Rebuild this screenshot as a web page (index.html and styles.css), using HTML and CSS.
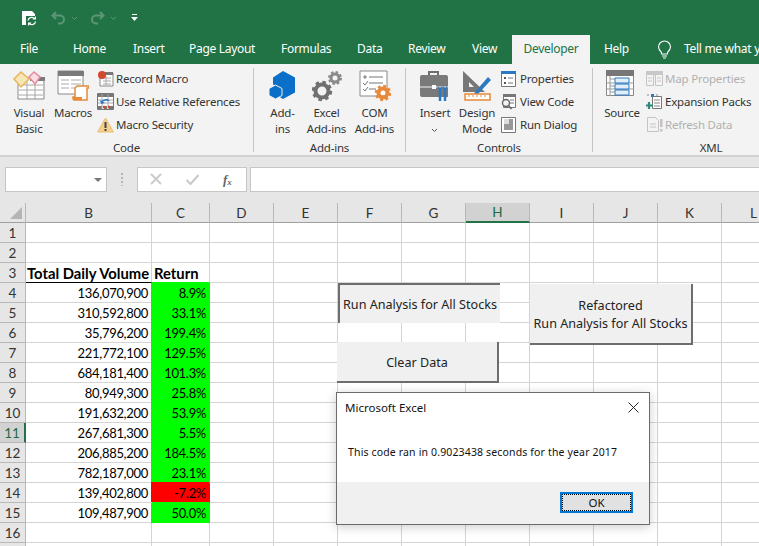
FILE: index.html
```html
<!DOCTYPE html>
<html lang="en">
<head>
    <meta charset="UTF-8">
    <meta name="viewport" content="width=device-width, initial-scale=1.0">
    <title>Microsoft Excel</title>
    <link rel="stylesheet" href="styles.css">
</head>
<body>
<div class="app">
    <div class="titlebar">
        <svg class="qa save" width="17" height="16" viewBox="0 0 17 16"><path d="M1 1h10l3 3v2H5v9H1z" fill="#fff"/><path d="M7 10.500a3.500 3.500 0 0 1 6-2M14.500 11.500a3.500 3.500 0 0 1-6 2" fill="none" stroke="#fff" stroke-width="1.300"/><path d="M15 6v3.500h-3.500zM7 16v-3.500h3.500z" fill="#fff"/></svg>
        <svg class="qa undo" width="15" height="14" viewBox="0 0 15 14"><path d="M5 1 1.500 4.500 5 8M2 4.500h7a4 4 0 0 1 0 8H7" fill="none" stroke="#5d9677" stroke-width="2"/></svg>
        <svg class="qa chev" width="7" height="5" viewBox="0 0 7 5"><path d="m1 1 2.500 2.500L6 1" fill="none" stroke="#5d9677"/></svg>
        <svg class="qa redo" width="15" height="14" viewBox="0 0 15 14"><path d="m10 1 3.500 3.500L10 8M13 4.500H6a4 4 0 0 0 0 8h2" fill="none" stroke="#5d9677" stroke-width="2"/></svg>
        <svg class="qa chev" width="7" height="5" viewBox="0 0 7 5"><path d="m1 1 2.500 2.500L6 1" fill="none" stroke="#5d9677"/></svg>
        <svg class="qa more" width="7" height="7" viewBox="0 0 7 7"><path d="M1 0h5v1H1zM0 3h7L3.500 7z" fill="#fff"/></svg>
    </div>

    <div class="tabs">
        <span class="tab tab-file">File</span>
        <span class="tab tab-home">Home</span>
        <span class="tab tab-insert">Insert</span>
        <span class="tab tab-layout">Page Layout</span>
        <span class="tab tab-formulas">Formulas</span>
        <span class="tab tab-data">Data</span>
        <span class="tab tab-review">Review</span>
        <span class="tab tab-view">View</span>
        <span class="tab tab-active">Developer</span>
        <span class="tab tab-help">Help</span>
        <svg class="bulb" width="15" height="19" viewBox="0 0 15 19"><path d="M4.500 12.500C3 11 1.500 9.500 1.500 7a6 6 0 0 1 12 0c0 2.500-1.500 4-3 5.500v1.500h-6zM5 16h5M6 18h3" fill="none" stroke="#fff" stroke-width="1.100"/></svg>
        <span class="tab tab-tell">Tell me what you want to do</span>
    </div>

    <div class="ribbon">
        <section class="group group-code">
            <div class="group-body">
                <div class="big big-vb">
                    <svg width="32" height="32" viewBox="0 0 32 32"><path d="M5 9h25v20H5z" fill="#fff"/><path d="M17 7h15v4H17z" fill="#7a7a7a"/><path d="M6 15h24M6 20h24M6 25h24M14 12v17M22 12v17" stroke="#a8a8a8" fill="none"/><path d="M5 29V14M31 29V10M5 29h26" stroke="#8a8a8a" fill="none"/><path d="m1 9 7-7 8 7-8 8z" fill="#f7e6b6" stroke="#e8b45c" stroke-width="1.500"/><path d="m16 7 5-5 6 5-5 7z" fill="#f9dfe4" stroke="#e48ba0" stroke-width="1.500"/></svg>
                    <span class="label">Visual<br>Basic</span>
                </div>
                <div class="big big-macros">
                    <svg width="32" height="32" viewBox="0 0 32 32"><path d="M1 1h25v23H1z" fill="#fff" stroke="#8a8a8a"/><path d="M1 1h26v5H1z" fill="#7a7a7a"/><path d="M4 10h8M14 10h10M4 14h8M14 14h10M4 18h8M14 18h6" stroke="#aaa"/><path d="M20 16h12v2h-2v12H17l-1-1v-2h2V18z" fill="#fff" stroke="#e28b3c" stroke-width="1.500"/><path d="M16 27h9v3H17z" fill="#e8893a"/></svg>
                    <span class="label">Macros</span>
                </div>
                <div class="stack stack-code">
                    <div class="row"><svg width="17" height="17" viewBox="0 0 17 17"><path d="M3 3h13v13H3z" fill="#fff" stroke="#888"/><path d="M3 2h13v3H3z" fill="#777"/><path d="M6 8h8M6 11h8M6 14h8M9 6v9" stroke="#aaa"/><circle cx="5" cy="5" r="4" fill="#d1492a"/></svg>Record Macro</div>
                    <div class="row"><svg width="17" height="17" viewBox="0 0 17 17"><path d="M.5.500h16v16H.5z" fill="#fff" stroke="#777"/><path d="M1 1h15v3H1zM1 13h4v3H1zM7 13h3v3H7zM12 13h4v3h-4z" fill="#777"/><path d="M1 7h15M1 10h15M5 1v15M11 1v15" stroke="#aaa"/><path d="M5 9a4 3 0 0 1 7-1" fill="none" stroke="#2b79c2" stroke-width="1.500"/><path d="m3 7 1 4 4-1z" fill="#2b79c2"/><path d="M6 14h2M11 14h2" stroke="#d1492a" stroke-width="2.500"/></svg>Use Relative References</div>
                    <div class="row"><svg width="17" height="16" viewBox="0 0 17 16"><path d="M8.500 1 16.500 15H.5z" fill="#f4cf8d" stroke="#e8c07a"/><path d="M7.500 5h2v6h-2zM7.500 12h2v2h-2z" fill="#444"/></svg>Macro Security</div>
                </div>
            </div>
            <div class="group-name">Code</div>
        </section>

        <section class="group group-addins">
            <div class="group-body">
                <div class="big big-add">
                    <svg width="30" height="32" viewBox="0 0 30 32"><path d="M15 1l12 6.500v15L15 29l-5-3v-9l-5-2.500V7.500z" fill="#0a6fc8"/><path d="M7.500 15 14 18.500V25.500L7.500 29 1 25.500V18.500z" fill="#0a6fc8" stroke="#f3f3f3"/></svg>
                    <span class="label">Add-<br>ins</span>
                </div>
                <div class="big big-excel">
                    <svg width="30" height="32" viewBox="0 0 30 32"><circle cx="10" cy="21" r="6.500" fill="none" stroke="#707070" stroke-width="4"/><circle cx="10" cy="21" r="9" fill="none" stroke="#707070" stroke-width="2.500" stroke-dasharray="3.500 3.600"/><circle cx="23" cy="8" r="4" fill="none" stroke="#8a8a8a" stroke-width="3"/><circle cx="23" cy="8" r="6" fill="none" stroke="#8a8a8a" stroke-width="2" stroke-dasharray="2.500 2.200"/></svg>
                    <span class="label">Excel<br>Add-ins</span>
                </div>
                <div class="big big-com">
                    <svg width="32" height="32" viewBox="0 0 32 32"><path d="M1 1h27v25H1z" fill="#fff" stroke="#8a8a8a"/><path d="M10 7h14M10 13h14M10 19h7M5 6h2v2H5z" stroke="#777" fill="none"/><path d="m4 13 2 2 3-4M4 19l2 2 3-4" stroke="#777" fill="none"/><circle cx="24" cy="23" r="4.500" fill="none" stroke="#e8893a" stroke-width="4"/><circle cx="24" cy="23" r="7" fill="none" stroke="#e8893a" stroke-width="2.500" stroke-dasharray="2.800 2.700"/></svg>
                    <span class="label">COM<br>Add-ins</span>
                </div>
            </div>
            <div class="group-name">Add-ins</div>
        </section>

        <section class="group group-controls">
            <div class="group-body">
                <div class="big big-insert">
                    <svg width="32" height="32" viewBox="0 0 32 32"><path d="M10 6V2h9v4" fill="none" stroke="#6e6e6e" stroke-width="2"/><path d="M1 7a2 2 0 0 1 2-2h24a2 2 0 0 1 2 2v20H3a2 2 0 0 1-2-2z" fill="#7a7a7a"/><path d="M1 17h28" stroke="#f3f3f3"/><path d="M13 15h4v4h-4z" fill="#fff"/><path d="M21 18v13M26 18v13" stroke="#2b79c2" stroke-width="2.500"/><path d="M19 17l2 3 2-3M24 17l2 3 2-3" stroke="#2b79c2" fill="none" stroke-width="1.500"/></svg>
                    <span class="label">Insert<br><svg class="drop" width="7" height="5" viewBox="0 0 7 5"><path d="m1 1 2.500 2.500L6 1" fill="none" stroke="#555"/></svg></span>
                </div>
                <div class="big big-design">
                    <svg width="32" height="32" viewBox="0 0 32 32"><path d="M2 1v21h22z" fill="#777"/><path d="M8 12v5h5z" fill="#f3f3f3"/><path d="m14 22 13-15 3 3-13 14-4 1z" fill="#2b79c2"/><path d="M4 24h25v6H4z" fill="#fff" stroke="#e8893a" stroke-width="1.500"/><path d="M8 25v2M12 25v2M16 25v2M20 25v2M24 25v2" stroke="#e8893a"/></svg>
                    <span class="label">Design<br>Mode</span>
                </div>
                <div class="stack stack-controls">
                    <div class="row"><svg width="15" height="17" viewBox="0 0 15 17"><path d="M.5 1.500h14v15H.5z" fill="#fff" stroke="#777"/><path d="M0 1h15v3H0z" fill="#2b79c2"/><path d="M3 7h2v2H3zM3 12h2v2H3z" fill="#555"/><path d="M7 8h5M7 13h5" stroke="#777"/></svg>Properties</div>
                    <div class="row"><svg width="15" height="17" viewBox="0 0 15 17"><path d="M2.500 1.500h12v13h-12z" fill="#fff" stroke="#777"/><path d="M2 1h13v3H2z" fill="#777"/><path d="M9 7h4M9 10h4" stroke="#777"/><circle cx="5" cy="10" r="3.500" fill="#f3f3f3" stroke="#666" stroke-width="1.400"/><path d="m7.500 12.500 3 3.500" stroke="#666" stroke-width="1.600"/></svg>View Code</div>
                    <div class="row"><svg width="15" height="17" viewBox="0 0 15 17"><path d="M.5 1.500h14v15H.5z" fill="#fff" stroke="#777"/><path d="M3 3h9v11H3z" fill="#999"/><path d="M3 3h5v5H3z" fill="#ddd"/></svg>Run Dialog</div>
                </div>
            </div>
            <div class="group-name">Controls</div>
        </section>

        <section class="group group-xml">
            <div class="group-body">
                <div class="big big-source">
                    <svg width="32" height="32" viewBox="0 0 32 32"><path d="M.5 1.500h27v24H.5z" fill="#fff" stroke="#888"/><path d="M0 0h28v6H0z" fill="#777"/><path d="M4 6v20M4 9h6M4 16h6M4 22h6M1 13h27M1 19h27" stroke="#999" fill="none"/><path d="M9 8h14v5H9zM9 14h14v5H9zM9 20h14v5H9z" fill="#e3eef8" stroke="#2b79c2"/></svg>
                    <span class="label">Source</span>
                </div>
                <div class="stack stack-xml">
                    <div class="row off"><svg width="17" height="16" viewBox="0 0 17 16"><path d="M.5 1.500h7v13h-7zM9.500 1.500h7v13h-7z" fill="#f3f3f3" stroke="#c4c4c4"/><path d="M0 0h17v4H0z" fill="#c8c8c8"/><path d="M2 7h4M2 10h4M11 7h4M11 10h4" stroke="#c8c8c8"/></svg>Map Properties</div>
                    <div class="row"><svg width="17" height="17" viewBox="0 0 17 17"><path d="M6.500 3.500h9v12h-9z" fill="#fff" stroke="#777"/><path d="M8 7h6M8 10h6M8 13h6" stroke="#888"/><path d="M5 1h3v3H5z" fill="#2b79c2"/><path d="M3 2H1M10 2h2" stroke="#888"/><path d="M3 9v7M0 12.500h7" stroke="#2e8b7a" stroke-width="2.200"/></svg>Expansion Packs</div>
                    <div class="row off"><svg width="17" height="17" viewBox="0 0 17 17"><path d="M1.500 1.500h8l3 3v11h-11z" fill="#f3f3f3" stroke="#c4c4c4"/><path d="M4 8h6M4 11h6" stroke="#c4c4c4"/><path d="M14 3h2.500v8H14zM14 13h2.500v2.500H14z" fill="#c4c4c4"/></svg>Refresh Data</div>
                </div>
            </div>
            <div class="group-name">XML</div>
        </section>
    </div>

    <div class="formula-bar">
        <div class="name-box"><i class="arrow"></i></div>
        <div class="grip"></div>
        <div class="fx-box">
            <svg width="15" height="15" viewBox="0 0 15 15"><path d="m2 2 10 10M12 2 2 12" stroke="#c9c9c9" stroke-width="1.800"/></svg>
            <svg width="15" height="15" viewBox="0 0 15 15"><path d="m1.500 8 4 4 8-9" fill="none" stroke="#c9c9c9" stroke-width="2"/></svg>
            <span class="fx">f<sub>x</sub></span>
        </div>
        <div class="formula-input"></div>
    </div>

    <div class="sheet-wrap">
        <table class="sheet">
            <colgroup>
                <col class="c-head"><col class="c-b"><col class="c-c"><col class="c-std"><col class="c-std"><col class="c-std"><col class="c-std"><col class="c-std"><col class="c-std"><col class="c-std"><col class="c-std"><col class="c-std">
            </colgroup>
            <thead>
                <tr>
                    <th class="corner"><i></i></th><th>B</th><th>C</th><th>D</th><th>E</th><th>F</th><th>G</th><th class="sel">H</th><th>I</th><th>J</th><th>K</th><th>L</th>
                </tr>
            </thead>
            <tbody id="rows"></tbody>
        </table>

        <div class="xl-btn btn-run">Run Analysis for All Stocks</div>
        <div class="xl-btn btn-refactored">Refactored<br>Run Analysis for All Stocks</div>
        <div class="xl-btn btn-clear">Clear Data</div>

        <div class="dialog">
            <div class="dialog-title">
                <span>Microsoft Excel</span>
                <svg width="11" height="11" viewBox="0 0 11 11"><path d="m.5.500 10 10M10.500.500l-10 10" stroke="#222" stroke-width="1"/></svg>
            </div>
            <div class="dialog-msg">This code ran in 0.9023438 seconds for the year 2017</div>
            <div class="dialog-foot"><div class="ok"><span>OK</span></div></div>
        </div>
    </div>
</div>

<script>
    var data = [
        ['', ''], ['', ''],
        ['Total Daily Volume', 'Return'],
        ['136,070,900', '8.9%'], ['310,592,800', '33.1%'], ['35,796,200', '199.4%'],
        ['221,772,100', '129.5%'], ['684,181,400', '101.3%'], ['80,949,300', '25.8%'],
        ['191,632,200', '53.9%'], ['267,681,300', '5.5%'], ['206,885,200', '184.5%'],
        ['782,187,000', '23.1%'], ['139,402,800', '-7.2%'], ['109,487,900', '50.0%'],
        ['', ''], ['', '']
    ];
    var html = '';
    for (var i = 0; i < data.length; i++) {
        var n = i + 1;
        var b = data[i][0], c = data[i][1];
        var cClass = '';
        if (n == 3) cClass = 'title ret';
        else if (n > 3 && n < 16) cClass = c.charAt(0) == '-' ? 'num neg' : 'num pos';
        // row 17 only peeks in at the bottom edge, its number is out of view
        html += '<tr><th' + (n == 11 ? ' class="sel"' : '') + '>' + (n < 17 ? n : '') + '</th>';
        html += '<td class="' + (n == 3 ? 'title' : 'num') + '">' + b + '</td>';
        html += '<td class="' + cClass + '">' + c + '</td>';
        html += '<td></td><td></td><td></td><td></td><td></td><td></td><td></td><td></td><td></td></tr>';
    }
    document.getElementById('rows').innerHTML = html;
</script>
</body>
</html>
```

FILE: styles.css
```css
html, body {
    margin: 0;
    height: 100%;
    overflow: hidden;
}
body {
    font-family: "Noto Sans", "Open Sans", sans-serif;
    font-size: 12px;
    color: #262626;
    background-color: #e6e6e6;
}
.app {
    width: 759px;
    height: 546px;
    overflow: hidden;
}

/* title bar */
.titlebar {
    height: 35px;
    background-color: #217346;
    display: flex;
    align-items: center;
    padding-left: 21px;
    box-sizing: border-box;
}
.qa { flex: none; }
.undo { margin-left: 13px; margin-top: 1px; }
.titlebar .chev { margin-left: 5px; margin-top: 2px; }
.redo { margin-left: 12px; margin-top: 1px; }
.more { margin-left: 14px; }

/* tabs */
.tabs {
    height: 29px;
    background-color: #217346;
    display: flex;
    align-items: flex-end;
    color: #fff;
    white-space: nowrap;
    overflow: hidden;
}
.tab {
    height: 30px;
    line-height: 29px;
    flex: none;
    font-size: 12px;
    letter-spacing: -0.3px;
}
.tab-file { margin-left: 20px; width: 53px; }
.tab-home { width: 60px; }
.tab-insert { width: 56px; }
.tab-layout { width: 92px; }
.tab-formulas { width: 76px; }
.tab-data { width: 51px; }
.tab-review { width: 64px; }
.tab-view { width: 40px; }
.tab-active {
    width: 78px;
    text-align: center;
    background-color: #f3f3f3;
    color: #217346;
}
.tab-help { margin-left: 14px; width: 53px; }
.bulb { flex: none; margin: 0 12px 5px 0; }

/* ribbon */
.ribbon {
    height: 91px;
    background-color: #f3f3f3;
    border-bottom: 2px solid #d2d2d2;
    display: flex;
    color: #333;
}
.group {
    height: 84px;
    margin-top: 4px;
    border-right: 1px solid #c6c6c6;
    flex: none;
}
.group-code { width: 253px; }
.group-addins { width: 151px; }
.group-controls { width: 186px; }
.group-xml { width: 236px; border-right: 0; }
.group-body {
    height: 71px;
    display: flex;
}
.group-name {
    height: 13px;
    line-height: 18px;
    text-align: center;
    font-size: 11.500px;
    letter-spacing: -0.2px;
}
.big {
    flex: none;
    display: flex;
    flex-direction: column;
    align-items: center;
    line-height: 16px;
    text-align: center;
    white-space: nowrap;
    padding-top: 2px;
}
.big svg { height: 32px; margin-bottom: 3px; flex: none; }
.big .label { font-size: 11.500px; display: block; letter-spacing: -0.2px; }
.big .label .drop { height: 5px; margin: 0; }
.big-vb { width: 44px; margin-left: 7px; }
.big-macros { width: 44px; }
.big-add { width: 41px; margin-left: 8px; }
.big-excel { width: 47px; }
.big-com { width: 49px; }
.big-insert { width: 40px; margin-left: 9px; }
.big-design { width: 44px; }
.big-source { width: 44px; margin-left: 7px; }
.stack {
    display: flex;
    flex-direction: column;
    margin-top: -1px;
}
.stack-code { margin-left: 2px; }
.stack-controls { margin-left: 1px; }
.stack-xml { margin-left: 2px; }
.row {
    height: 23px;
    display: flex;
    align-items: center;
    font-size: 11.500px;
    letter-spacing: -0.2px;
    white-space: nowrap;
    gap: 2px;
}
.row svg { flex: none; width: 17px; }
.stack-controls .row { gap: 3px; }
.row.off { color: #b1b1b1; }

/* formula bar */
.formula-bar {
    display: flex;
    height: 25px;
    margin-top: 10px;
    align-items: stretch;
}
.name-box, .fx-box, .formula-input {
    background-color: #fff;
    border: 1px solid #c6c6c6;
    box-sizing: border-box;
}
.name-box {
    width: 102px;
    margin-left: 5px;
    position: relative;
}
.arrow {
    position: absolute;
    right: 4px;
    top: 10px;
    border: 4px solid transparent;
    border-top: 4px solid #777;
}
.grip {
    width: 2px;
    margin: 6px 14px;
    background-image: linear-gradient(#b5b5b5 2px, transparent 2px);
    background-size: 2px 4px;
}
.fx-box {
    width: 110px;
    display: flex;
    align-items: center;
    padding-left: 11px;
    gap: 21px;
}
.fx {
    font-family: "Liberation Serif", serif;
    font-style: italic;
    font-weight: bold;
    font-size: 13px;
    color: #666;
    margin-left: 2px;
}
.fx sub { font-size: 9px; vertical-align: -1px; }
.formula-input {
    flex: 1;
    margin-left: 3px;
    border-right: 0;
}

/* sheet */
.sheet-wrap {
    position: relative;
    margin-top: 11px;
    height: 343px;
    background-color: #fff;
    overflow: hidden;
}
.sheet {
    border-collapse: separate;
    border-spacing: 0;
    table-layout: fixed;
    width: 781px;
    font-family: "Lato", "Liberation Sans", sans-serif;
    font-size: 13px;
    letter-spacing: -0.3px;
    color: #000;
}
.c-head { width: 26px; }
.c-b { width: 126px; }
.c-c { width: 58px; }
.c-std { width: 64px; }
.sheet th {
    background-color: #e6e6e6;
    font-weight: normal;
    border-right: 1px solid #b8b8b8;
    border-bottom: 1px solid #b8b8b8;
    box-sizing: border-box;
    color: #333;
    font-size: 13.500px;
    letter-spacing: 0;
    padding: 1px 0 0;
    line-height: 17px;
}
.sheet thead th {
    height: 20px;
    border-bottom: 1px solid #a0a0a0;
}
.sheet thead th.sel {
    background-color: #d2d2d2;
    color: #1d6b41;
    border-bottom: 2px solid #217346;
}
.sheet tbody th { height: 20px; }
.sheet tbody th.sel {
    background-color: #d2d2d2;
    color: #1d6b41;
    border-right: 2px solid #217346;
}
.corner { position: relative; }
.corner i {
    position: absolute;
    right: 3px;
    bottom: 3px;
    width: 0;
    height: 0;
    border-left: 12px solid transparent;
    border-bottom: 12px solid #b5b5b5;
}
.sheet td {
    height: 20px;
    padding: 1px 3px 0;
    box-sizing: border-box;
    border-right: 1px solid #d4d4d4;
    border-bottom: 1px solid #d4d4d4;
    white-space: nowrap;
    overflow: hidden;
    line-height: 17px;
}
.num { text-align: right; }
.sheet td.title {
    font-weight: bold;
    font-size: 14.800px;
    letter-spacing: 0;
    padding: 1px 0 0 1px;
    border-bottom: 1px solid #000;
}
.sheet td.ret {
    padding-left: 2px;
    border-bottom-color: #00ff00;
}
.sheet td.pos {
    background-color: #00ff00;
    border-right-color: #00ff00;
    border-bottom-color: #00ff00;
    box-shadow: -1px 0 0 #00ff00;
}
/* the fill also covers the gridline above it, as Excel draws it */
.sheet td.neg {
    background-color: #ff0000;
    border-right-color: #ff0000;
    border-bottom-color: #00ff00;
    box-shadow: -1px -1px 0 #ff0000;
}

/* buttons on the sheet */
.xl-btn {
    position: absolute;
    background-color: #f0f0f0;
    box-sizing: border-box;
    text-align: center;
    font-size: 12.600px;
    line-height: 18px;
    color: #222;
    display: flex;
    align-items: center;
    justify-content: center;
    padding-top: 2px;
}
.btn-run {
    left: 338px;
    top: 80px;
    width: 162px;
    height: 40px;
    border-top: 2px solid #6d6d6d;
    border-left: 2px solid #6d6d6d;
}
.btn-refactored {
    left: 530px;
    top: 81px;
    width: 163px;
    height: 61px;
    border-right: 2px solid #6d6d6d;
    border-bottom: 2px solid #6d6d6d;
}
.btn-clear {
    left: 337px;
    top: 139px;
    width: 162px;
    height: 41px;
    border-right: 2px solid #6d6d6d;
    border-bottom: 2px solid #6d6d6d;
}

/* message box */
.dialog {
    position: absolute;
    left: 336px;
    top: 189px;
    width: 314px;
    height: 133px;
    box-sizing: border-box;
    background-color: #fff;
    border: 1px solid #6b6b6b;
    box-shadow: 0 2px 10px rgba(0, 0, 0, 0.2);
    display: flex;
    flex-direction: column;
    color: #111;
}
.dialog-title {
    height: 29px;
    display: flex;
    justify-content: space-between;
    align-items: center;
    padding: 0 10px 0 8px;
    font-size: 11.500px;
}
.dialog-msg {
    flex: 1;
    padding: 23px 0 0 11px;
    font-size: 10.500px;
    line-height: 15px;
    letter-spacing: .15px;
}
.dialog-foot {
    height: 42px;
    background-color: #f0f0f0;
    display: flex;
    justify-content: flex-end;
    padding: 10px 16px 0 0;
    box-sizing: border-box;
}
.ok {
    width: 73px;
    height: 21px;
    box-sizing: border-box;
    border: 2px solid #0078d7;
    background-color: #e1e1e1;
    outline: 1px dotted #000;
    outline-offset: -3px;
    text-align: center;
    line-height: 17px;
    font-size: 11.500px;
}
```
